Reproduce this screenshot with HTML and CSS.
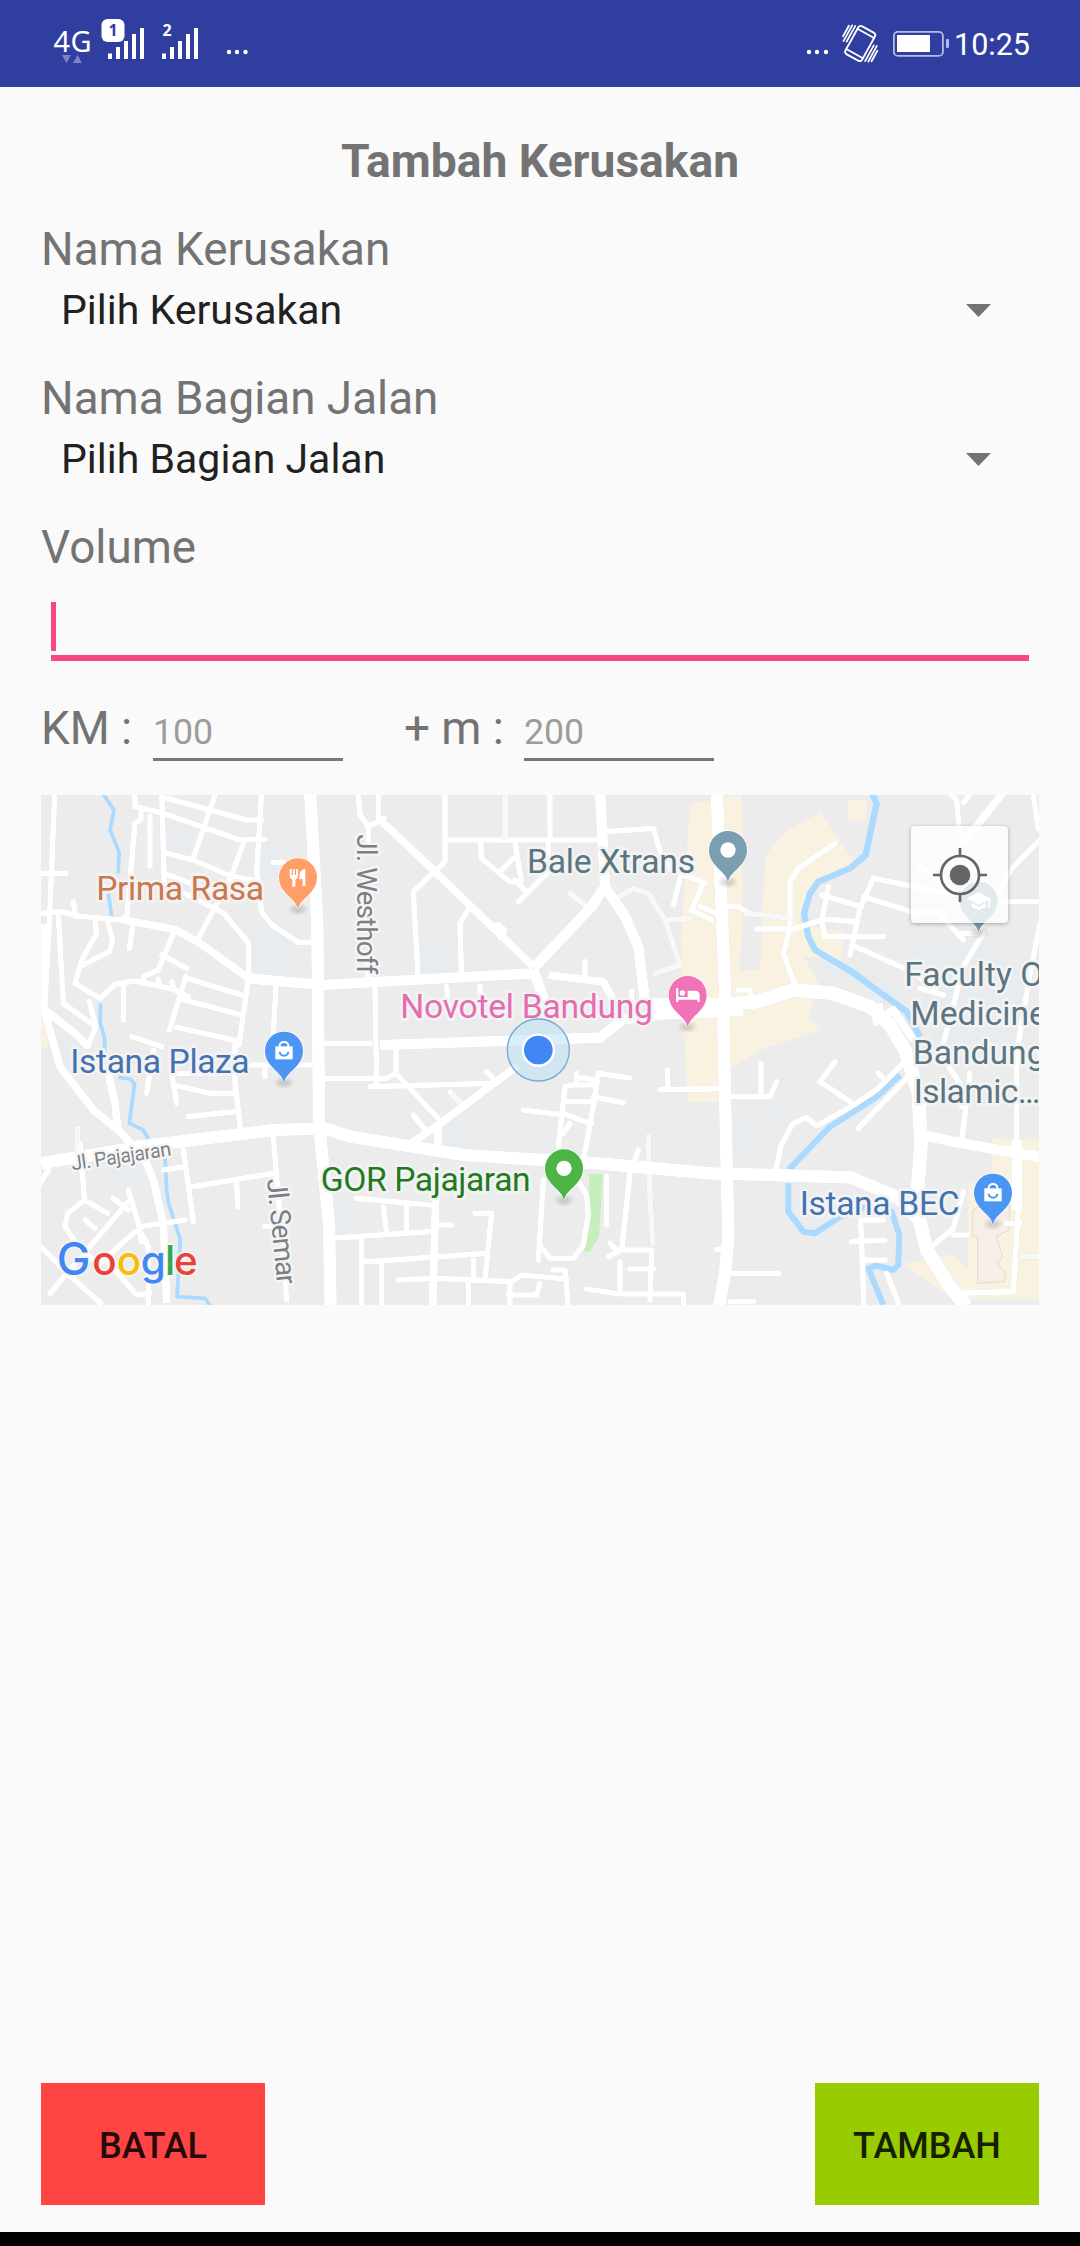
FILE: index.html
```html
<!DOCTYPE html>
<html lang="id">
<head>
<meta charset="utf-8">
<title>Tambah Kerusakan</title>
<link rel="stylesheet" href="styles.css">
</head>
<body>
<div class="screen">
  <header class="status">
    <svg class="status-left" viewBox="0 0 260 87" width="260" height="87">
      <text class="net" x="53.500" y="51.500" textLength="38">4G</text>
      <path class="traffic" d="M62 55h9l-4.500 8zM73 63h9l-4.500-8z"/>
      <path class="bar" d="M108 53.500h4v5.500h-4zM116 47h4v12h-4zM124 41h4v18h-4zM132 34h4v25h-4zM140 28h4v31h-4z"/>
      <rect class="bar" x="101.500" y="19" width="23" height="23" rx="6"/>
      <text class="sim sim-on" x="113" y="36" text-anchor="middle">1</text>
      <path class="bar" d="M162 53.500h4v5.500h-4zM170 47h4v12h-4zM178 41h4v18h-4zM186 34h4v25h-4zM194 28h4v31h-4z"/>
      <text class="sim" x="167" y="36" text-anchor="middle">2</text>
      <g class="bar"><circle cx="229" cy="52" r="2.200"/><circle cx="237" cy="52" r="2.200"/><circle cx="245.500" cy="52" r="2.200"/></g>
    </svg>
    <div class="status-right">
      <svg viewBox="800 0 152 87" width="152" height="87">
        <g class="bar"><circle cx="809" cy="52" r="2.200"/><circle cx="817" cy="52" r="2.200"/><circle cx="826" cy="52" r="2.200"/></g>
        <g class="vibrate" transform="translate(860.200 43.500) rotate(29)">
          <rect x="-9.500" y="-16" width="19" height="32" rx="3"/>
          <path d="M-9.500-11.500h19M-9.500 11.500h19M-12.800-13v18M-15.800-12v18M-18.500-10v12M12.800-5v18M15.800-6v18M18.500-2v12"/>
        </g>
        <rect class="cell" x="893.900" y="31.900" width="49" height="24" rx="4"/>
        <rect class="bar" x="897" y="35" width="33" height="17"/>
        <rect class="nub" x="946" y="39" width="3" height="9" rx="1"/>
      </svg>
      <span class="clock">10:25</span>
    </div>
  </header>

  <main class="form">
    <h1 class="title">Tambah Kerusakan</h1>
    <section class="field">
      <div class="label">Nama Kerusakan</div>
      <div class="spinner"><span>Pilih Kerusakan</span><svg width="25" height="13" viewBox="0 0 25 13"><path d="M0 0h25L12.500 13z"/></svg></div>
    </section>
    <section class="field">
      <div class="label">Nama Bagian Jalan</div>
      <div class="spinner"><span>Pilih Bagian Jalan</span><svg width="25" height="13" viewBox="0 0 25 13"><path d="M0 0h25L12.500 13z"/></svg></div>
    </section>
    <section class="volume">
      <div class="label">Volume</div>
      <div class="volume-input"><i class="caret"></i></div>
    </section>
    <section class="station">
      <span class="label km">KM :</span><span class="small-input">100</span>
      <span class="label meter">+ m :</span><span class="small-input">200</span>
    </section>

    <section class="map">
      <svg class="map-art" viewBox="3 15 2994 1530" width="998" height="510">
        <defs><path id="pin" d="M0 96C-7 61-57 49-57 0A57 57 0 1 1 57 0C57 49 7 61 0 96z"/>
        <radialGradient id="shade"><stop offset="0" stop-color="#000" stop-opacity=".2"/><stop offset="1" stop-color="#000" stop-opacity="0"/></radialGradient></defs>
        <!-- land use -->
        <g class="campus">
          <path d="M380 90l96 24-30 90-66-20zM665 150h35l20 110-60 10zM650 390l50 10 60 60v110l-130-10V460zM20 690l100 60-20 100H50zM870 1250h80v90h-80zM190 1130l110 20 10 50-110 0z"/>
          <path d="M1138 460h110v100h-110zM1205 1005l80-20v90h-80zM2350 490l180 80 80 80-120-60-140-30zM2600 460l180-30 180 130v240H2700z"/>
          <path d="M2125 520l60-30v-75h-50zM2170 940h50v60h-50zM2080 1010h70v60h-70z"/>
        </g>
        <g class="shops">
          <path d="M1950 42l155-27 2 400-10 130 60-10 20-340 60-70 105-60 60 90 40 60-110 60-60 130 140 20-10 80-110-5 50 90-40 90 40 40-180 60-90 55v100h-130l-20-480z"/>
          <path d="M2425 30h55v62h-58zM3 680h20v95H3z"/>
          <path d="M2855 1047h142v480H2790l-80-20-120-85 150-30 45 45V1180h70z"/>
          <path class="mall" d="M2798 1260l110-60v120l-40 20 20 60-15 20 25 30-5 25-80 5v-140h-15z"/>
        </g>
        <path class="gap" d="M2112 400h55l-5 110-10 30h-40z"/>
        <path class="park" d="M1647 1152h42l-12 190-28 43h-17l15-200z"/>

        <!-- water -->
        <g class="stream">
          <path d="M188 10l34 50-12 60 28 68-4 62M205 310l10 70M182 640l-2 55 14 50v40M235 862l35 5 14 15-16 118 42 20 25 45M375 1100l5 100 6 40 35 110-10 170 85 5 25 40"/>
        </g>
        <g class="river">
          <path class="w22" d="M2493 5l17 35-15 70-18 85-47 40-95 40-25 35-18 60 13 70 20 40 110 65 75 55 90 65 40 75"/>
          <path class="w14" d="M2580 855l-75 70-135 85-125 130"/>
          <path class="w14" d="M2245 1180v85l45 60 35 5 75-50 80-30 75 15 23 70-3 90-15 15-50-13-25 8 45 110"/>
        </g>

        <g class="network">
        <!-- minor roads -->
        <g class="lane">
          <path d="M44 15L28 400 15 640M3 250h75M3 370l60-5 50 13 130 12 17-10 25-280 18-12V55M285 0v50M290 50l80 20 230 80 75-2M330 80v148M365 0l7 250 80 30 70 25M380 25l240 65h45M525 15L460 205M380 190l80 20 105 45 90 20M665 0l-15 245 15 120 30 40 80 52h32M612 155l-40 110-100 185M700 217h30M372 260l0 20 180 90 74 90v100M100 335l8 45M280 395l-12 80M400 430l-45 110-45 20v20M365 495l75 40M55 375l15 265 90 65M165 390l5 40-45 80-20 70 75 45 45-42 60-10 115 25 45 22M203 395l15 55-10 35-78 40M148 635l20 75-25 60M250 590v100M355 568l5 20M395 575l5 15M438 560l-50 160M440 565l165 50M425 628l170 45M410 712l180 40M275 740l90 30M625 565l-28 200M708 590l-10 170"/>
          <path d="M1015 15v70M955 15l5 60 22 30h15l35-20M985 105v75M983 510v60M1005 590l5 300M1215 0v215l-95 90 15 270M1215 150h470M1395 15v130M1530 0v150M1322 150l2 55 85 70h35l-20-125M1380 245l40-40M1424 270l35 35M1525 150v95l-90 90M1290 350l-30 50 5 170M1352 412l22-8 20 16-12 24M1700 125l140-10 25 85 30 40 100 40M1920 265l-20 80M1985 290l-30 70 60 30M1635 515v50M1220 590l5 70M1320 590v50M1775 605v50M990 890l370-10"/>
          <path d="M2045 350h50l30 18M2150 417h110l95-30 90 8M2385 160l-110 75-25 40v140l-20 75 35 95M2365 290l-20 105 10 45h175M2345 315l120 35M2500 265l-40 90-30 140M2500 265l220 45M2470 320l160 50 70-8M2435 465l180 80 70 50M2030 370l-50-20M2095 600h35l5 35M2725 5l25 25 8 95 32 25M2770 38l25-30M3000 150l-80 80-60 100M2880 335h120M2980 15l15 100M3000 400l-30 150-35 210M2690 360l80 90M2830 430l-60 100-60 230M2755 430h55M2640 230l80 60M2640 595l70 20"/>
          <path d="M340 780l-20 130M395 850l15 90M395 850h190M400 885l110 25h75M585 765v110l18 155M445 980l140-15M675 830v30M600 825h220M850 865h140M850 760h140M430 1080l30 215M370 1140l65-10M460 1190l240-40M590 1175l3 75M700 1040l40 490M675 1310h30M120 1060l13 165M25 1140l-30 50M133 1230l70 40M133 1230l-50 40-8 40 30 45 60 60M30 1510l235-275M265 1200l30 100 10 55M220 1225l45 35M135 1290l30 25M300 1310l135-20M285 1325l-105 95M305 1330l20 40v170M3 1370l90 90 90 80M190 1400l100 115 40-5"/>
          <path d="M1068 770v80l140 150M990 865l45 2 30-15M1120 975l40 50M1230 905l35 40M1340 845l30 30M1450 960l120 15M1555 1070l20-180 20-5h75M1610 850v30M1575 935h75M1675 850l-15 100-30 160M1675 850l95 14M1660 920l90 18M1610 862l60 8M1570 970l65 25 20 5M1590 1000l-20 30M1860 898h150M1883 840v50M1795 1080l-20 60M1700 1160v145M1510 1170l-15 240M1500 1365l30 40h70l30-40 15-90-5-60-30-50M950 1225l220 20M1030 1250l10 80M1100 1250v80M870 1345l300-20M1190 1305h45M1305 1270h50l-20 195M990 1415l350-25M1300 1395v75M1075 1470l110-5 230 10 30-20 135 12M1540 1440h35l10 110M1410 1475v70M1500 1480l-10 35h-85M1025 1420v130M1285 1480v70M965 1345v200M990 1415h-20M1770 1150l-25 230h90l-5 150M1710 1360l25 25-30 15M1740 1415v90M1770 1437h70M1640 1497l100 15h190v40"/>
          <path d="M2070 920h120l20-45M2163 820v100M2385 815l-45 60 90 60M2515 850l12 12M2590 820l-75 75-90 60-95 52-32-25-40 20-35 65-15 70M2455 1015l145-150M1960 895h90M2765 950l-5-70-40-60M2790 850l-25 200M2930 770v280M2770 1205l-30 110-70 60M2740 1335h40M2435 1355l100-5M2530 1290h-68l10 260M2480 1410h55M2540 1450l40 100M2030 1378h30M2080 1450h135M2070 1535h70M2740 1510l180-5 15-250M2900 1300h40"/>
        </g>
        <g class="lane faint">
          <path d="M1393 15v130M1730 325l50-30 45 15 50 80 45 135-75 25M1885 390l65-5M1590 310l50 40M2120 370l140 15M1826 1040v100l12 220M113 1015v60M1240 915l35 35M2945 1400h60"/>
        </g>

        <!-- arterial roads -->
        <g class="road">
          <path class="w24" d="M15 400L10 650 60 830 160 960 240 1025 290 1080M205 850l20 90 10 90M15 660l90 70 40 40M290 1050l50 120 30 130 10 240M243 388l160 30 75 40 145 105"/>
          <path class="w24" d="M1015 85l165 155 300 290M1090 1075l105-70 240-180M1195 1000l-2 80M1190 1120l-12 430M1525 555l165 20 35 65"/>
          <path class="w30" d="M1680 0l15 290-40 60-175 185M1695 290l60 90 40 90 20 165M1480 540l40 110M625 565l220 20 635-35M1020 765l660-22 70-55 120-15 240-10"/>
          <path class="w34" d="M2030 0l25 600-5 100 15 640-10 110-20 110"/>
          <path class="w34" d="M810 0l22 400 5 600 30 300 5 260"/>
          <path class="w34" d="M3 1120l330-55 370-45 150-5 80 25 340 55 400 25 340 30 420 12 140 60 75 80"/>
          <path class="w40" d="M1830 645h200l120-10 110-35 120 10 110 40 60 55 45 75 40 130 8 150-14 190 31 130 70 110 50 60"/>
          <path class="w30" d="M2650 1035l90 20 260 47M2930 1050v210"/>
          <path class="w24" d="M2895 0l-130 165M2470 655l60-5M2500 700l60-40 60 90"/>
        </g>
        </g>
        <path class="island" d="M1693 322l8 12h-16z"/>

        <!-- pins -->
        <g><ellipse cx="774" cy="358" rx="32" ry="20" fill="url(#shade)"/><ellipse cx="2064" cy="276" rx="32" ry="20" fill="url(#shade)"/><ellipse cx="732" cy="877" rx="32" ry="20" fill="url(#shade)"/><ellipse cx="1943" cy="711" rx="32" ry="20" fill="url(#shade)"/><ellipse cx="1572" cy="1231" rx="32" ry="20" fill="url(#shade)"/><ellipse cx="2859" cy="1302" rx="32" ry="20" fill="url(#shade)"/><ellipse cx="2816" cy="428" rx="32" ry="20" fill="url(#shade)"/></g>
        <g class="pin food" transform="translate(774 262)"><use href="#pin"/><path class="glyph" d="M-25-25h6v18h4v-18h5v18h4v-18h6v22q0 8-8 10v21h-9v-21q-8-2-8-10zM22-25v51h-8V6H4v-15q2-14 18-16z"/></g>
        <g class="pin slate" transform="translate(2064 180)"><use href="#pin"/><circle class="glyph" r="23"/></g>
        <g class="pin shop" transform="translate(732 782)"><use href="#pin"/><path class="glyph" d="M-26-13h52v39h-52z"/><path class="handle" d="M-13-12v-3a13 11 0 0 1 26 0v3"/><path class="smile" d="M-13 3a13 12 0 0 0 26 0"/></g>
        <g class="pin hotel" transform="translate(1943 615)"><use href="#pin"/><path class="glyph" d="M-35-20h7v26h28v-19h22q14 0 14 14v20h-7V14h-57v7h-7z"/><circle class="glyph" cx="-16" cy="-6" r="8"/></g>
        <g class="pin sport" transform="translate(1572 1135)"><use href="#pin"/><circle class="glyph" r="23"/></g>
        <g class="pin shop" transform="translate(2859 1208)"><use href="#pin"/><path class="glyph" d="M-26-13h52v39h-52z"/><path class="handle" d="M-13-12v-3a13 11 0 0 1 26 0v3"/><path class="smile" d="M-13 3a13 12 0 0 0 26 0"/></g>
        <g class="pin slate" transform="translate(2816 332)"><use href="#pin"/><path class="glyph" d="M0-25l35 18v28h-6V-2L0 13-35-7zM-21 7L0 18 21 7v12L0 29-21 19z"/></g>

        <!-- labels -->
        <g class="name">
          <text class="t-food" x="169" y="330" textLength="503">Prima Rasa</text>
          <text class="t-slate" x="1461" y="249" textLength="504">Bale Xtrans</text>
          <text class="t-hotel" x="1081" y="684" textLength="758">Novotel Bandung</text>
          <text class="t-shop" x="91" y="849" textLength="538">Istana Plaza</text>
          <text class="t-sport" x="842" y="1203" textLength="630">GOR Pajajaran</text>
          <text class="t-shop" x="2279" y="1275" textLength="480">Istana BEC</text>
          <text class="t-slate" x="2593" y="588">Faculty O</text>
          <text class="t-slate" x="2611" y="704">Medicine</text>
          <text class="t-slate" x="2618" y="821">Bandung</text>
          <text class="t-slate" x="2621" y="939" textLength="380">Islamic…</text>
        </g>
        <g class="street">
          <text class="st-big" transform="translate(951 133) rotate(90)" textLength="420">Jl. Westhoff</text>
          <text class="st-big" transform="translate(681 1168) rotate(84.500)" textLength="318">Jl. Semar</text>
          <text class="st-small" transform="translate(97 1141) rotate(-8.500)" textLength="302">Jl. Pajajaran</text>
        </g>
        <text class="google" y="1454"><tspan class="gb cap" x="50">G</tspan><tspan class="gr" x="157">o</tspan><tspan class="gy" x="230">o</tspan><tspan class="gb" x="302">g</tspan><tspan class="gg" x="375">l</tspan><tspan class="gr" x="402">e</tspan></text>

        <!-- current position -->
        <circle class="halo" cx="1495" cy="780" r="93"/>
        <circle class="dot-ring" cx="1495" cy="781" r="50"/>
        <circle class="dot" cx="1495" cy="780" r="43"/>
      </svg>
      <button class="locate" aria-label="Lokasi saya">
        <svg viewBox="-81 -81 162 162" width="54" height="54"><circle class="ring" r="57"/><circle r="31"/><path class="ring" d="M0-81v25M0 56v25M-81 0h25M56 0h25"/></svg>
      </button>
    </section>

    <div class="actions">
      <button class="btn cancel">BATAL</button>
      <button class="btn add">TAMBAH</button>
    </div>
  </main>
  <footer class="navbar"></footer>
</div>
</body>
</html>
```
FILE: styles.css
```css
* { box-sizing: border-box; }
body { margin: 0; background: #fafafa; font-family: Roboto, "Liberation Sans", sans-serif; color: #737373; }
.screen { width: 1080px; height: 2246px; display: flex; flex-direction: column; overflow: hidden; }

.status { height: 87px; flex: none; display: flex; justify-content: space-between; background: #303f9f; color: #fff; }
.status svg { display: block; }
.status-right { display: flex; width: 280px; }
.net { font: 29px "Noto Sans", sans-serif; fill: #fff; }
.sim { font: bold 16px "Noto Sans", sans-serif; fill: #fff; }
.sim-on { fill: #303f9f; }
.bar { fill: #fff; }
.traffic { fill: #7a85c6; }
.vibrate { fill: none; stroke: #fff; stroke-width: 1.8; stroke-linecap: round; }
.cell { fill: none; stroke: #b4bbe6; stroke-width: 1.8; }
.nub { fill: #b4bbe6; }
.clock { font-size: 30.5px; line-height: 90px; padding-left: 2px; white-space: nowrap; }

.form { flex: 1; display: flex; flex-direction: column; padding: 47px 41px 27px; }
.title { margin: 0 0 34px; font-size: 46.2px; line-height: 54px; font-weight: 700; text-align: center; }
.label { height: 54px; font-size: 45.8px; line-height: 56px; }
.field { height: 149px; flex: none; }
.spinner { display: flex; align-items: center; justify-content: space-between; height: 48px; margin-top: 10px; padding: 0 48px 0 20px; font-size: 41px; line-height: 48px; color: #212121; }
.spinner svg { fill: #737373; }
.volume { height: 181px; flex: none; }
.volume-input { height: 59px; margin: 28px 10px 0; border-bottom: 6px solid #f84781; }
.caret { display: block; width: 5px; height: 49px; background: #f84781; }
.station { display: flex; align-items: flex-start; height: 94px; flex: none; }
.km { width: 112px; }
.small-input { width: 190px; height: 60px; padding-top: 10px; font-size: 35.7px; line-height: 42px; color: #9c9c9c; border-bottom: 3px solid #777; }
.meter { width: 181px; padding-left: 61px; white-space: nowrap; }

.map { position: relative; height: 510px; flex: none; overflow: hidden; background: #ececec; }
.map-art { display: block; }
.campus { fill: #e8ecef; }
.shops { fill: #faf2e1; }
.mall { fill: #f5efe8; stroke: #e8d9c6; stroke-width: 3; }
.gap { fill: #ececec; }
.park { fill: #c6efbb; }
.stream, .river { fill: none; stroke: #aadaff; stroke-linejoin: round; }
.stream { stroke-width: 11; }
.network { filter: drop-shadow(0 0 2px rgba(0, 0, 0, .14)); }
.lane { fill: none; stroke: #fff; stroke-width: 17; stroke-linecap: round; stroke-linejoin: round; }
.faint { stroke: #f8f8f8; }
.road { fill: none; stroke: #fff; stroke-linejoin: round; }
.w14 { stroke-width: 18; }
.w22 { stroke-width: 19; }
.w24 { stroke-width: 24; }
.w30 { stroke-width: 32; }
.w34 { stroke-width: 38; }
.w40 { stroke-width: 42; }
.island { fill: #e4e4e4; }
.pin use { stroke: #fff; stroke-width: 5; stroke-opacity: .7; paint-order: stroke; }
.glyph { fill: #fff; }
.handle { fill: none; stroke: #fff; stroke-width: 6; }
.smile { fill: none; stroke: #4a95f5; stroke-width: 6; }
.food { fill: #ff9e67; }
.slate { fill: #7b9eb0; }
.shop { fill: #4b96f3; }
.hotel { fill: #f073b7; }
.sport { fill: #4db546; }
.name text { font-size: 101px; stroke: #f3f3f3; stroke-width: 16px; stroke-linejoin: round; paint-order: stroke; }
.t-food { fill: #ca7850; }
.t-slate { fill: #5b7582; }
.t-hotel { fill: #e56cb0; }
.t-shop { fill: #4272b0; }
.t-sport { fill: #217a20; }
.street text { fill: #7b8085; stroke: #f5f5f5; stroke-width: 14px; stroke-linejoin: round; paint-order: stroke; }
.st-big { font-size: 84px; }
.st-small { font-size: 60px; }
.google { font-family: Inter, sans-serif; font-size: 121px; font-weight: 500; stroke: #f5f5f5; stroke-width: 10px; paint-order: stroke; }
.cap { font-size: 135px; }
.gb { fill: #4285f4; }
.gr { fill: #ea4335; }
.gy { fill: #fbbc05; }
.gg { fill: #34a853; }
.halo { fill: #b8e0f5; fill-opacity: .5; stroke: #76a9d8; stroke-width: 4; }
.dot-ring { fill: #fff; }
.dot { fill: #4285f4; }
.locate { position: absolute; top: 31px; left: 870px; width: 97px; height: 97px; display: grid; place-items: center; padding: 0; border: 0; border-radius: 4px; background: rgba(255, 255, 255, .78); box-shadow: 0 1px 4px rgba(0, 0, 0, .3); }
.locate svg { fill: #666; }
.locate .ring { fill: none; stroke: #666; stroke-width: 8; }

.actions { display: flex; justify-content: space-between; margin-top: auto; }
.btn { width: 224px; height: 122px; padding: 3px 0 0; border: 0; font: 500 36px/42px Roboto, sans-serif; }
.cancel { background: #ff4444; color: #260a0a; }
.add { background: #99cc00; color: #171f00; }
.navbar { height: 14px; flex: none; background: #000; }
```
